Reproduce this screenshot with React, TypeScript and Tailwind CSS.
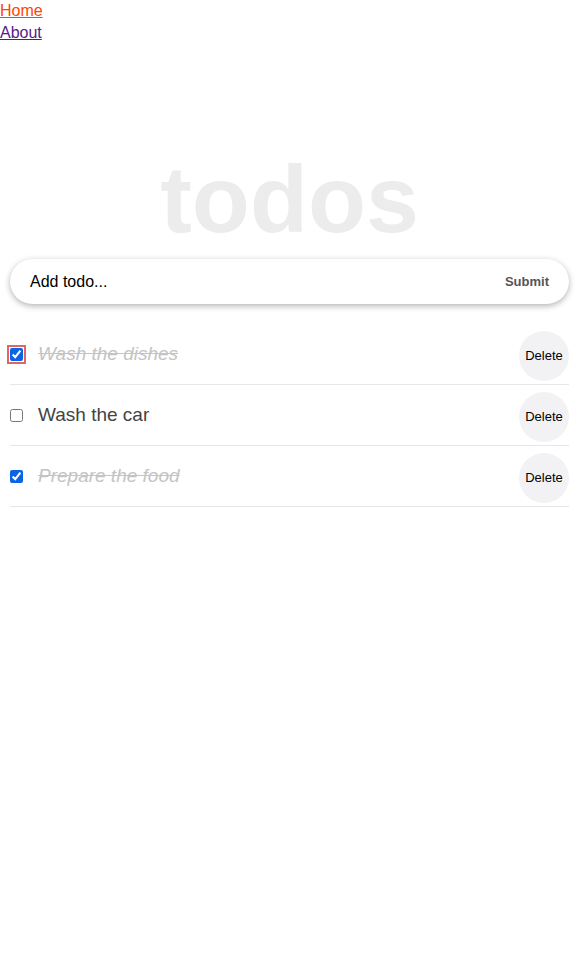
const todos = [
  { id: 1, text: "Wash the dishes", done: true, focused: true },
  { id: 2, text: "Wash the car", done: false, focused: false },
  { id: 3, text: "Prepare the food", done: true, focused: false },
];

export default function App() {
  return (
    <div className="min-h-[954px] bg-white font-['Liberation_Sans',Arial,sans-serif]">
      <nav className="flex flex-col gap-[4px] pt-[2px]">
        <a href="#" className="block w-fit text-[16px] leading-[18px] text-[#ff4500] underline">
          Home
        </a>
        <a href="#" className="block w-fit text-[16px] leading-[18px] text-[#551a8b] underline">
          About
        </a>
      </nav>

      <h1 className="mt-[109px] text-center text-[95px] font-bold leading-[96px] text-[#ececec]">
        todos
      </h1>

      <div className="mx-[10px] mt-[12px] flex h-[45px] items-center justify-between rounded-full bg-white pl-[20px] pr-[20px] shadow-[0_2px_6px_rgba(0,0,0,0.3)]">
        <span className="text-[16px] text-black">Add todo...</span>
        <span className="text-[13px] font-bold text-[#555]">Submit</span>
      </div>

      <ul className="mx-[10px] mt-[20px]">
        {todos.map((t) => (
          <li key={t.id} className="flex items-center border-b border-[#e6e6e6] py-[5px]">
            <input
              type="checkbox"
              defaultChecked={t.done}
              className={
                "ml-0 h-[13px] w-[13px] accent-[#0b64e6] " +
                (t.focused ? "outline-2 outline-offset-[1px] outline-[#e06565] rounded-[2px]" : "")
              }
            />
            <span
              className={
                "ml-[15px] flex-1 text-[19px] " +
                (t.done ? "italic text-[#c4c4c4] line-through" : "text-[#444]")
              }
            >
              {t.text}
            </span>
            <button className="mt-[2px] -mb-[2px] flex h-[50px] w-[50px] items-center justify-center rounded-full bg-[#f2f2f4] text-[13px] text-black">
              Delete
            </button>
          </li>
        ))}
      </ul>
    </div>
  );
}
